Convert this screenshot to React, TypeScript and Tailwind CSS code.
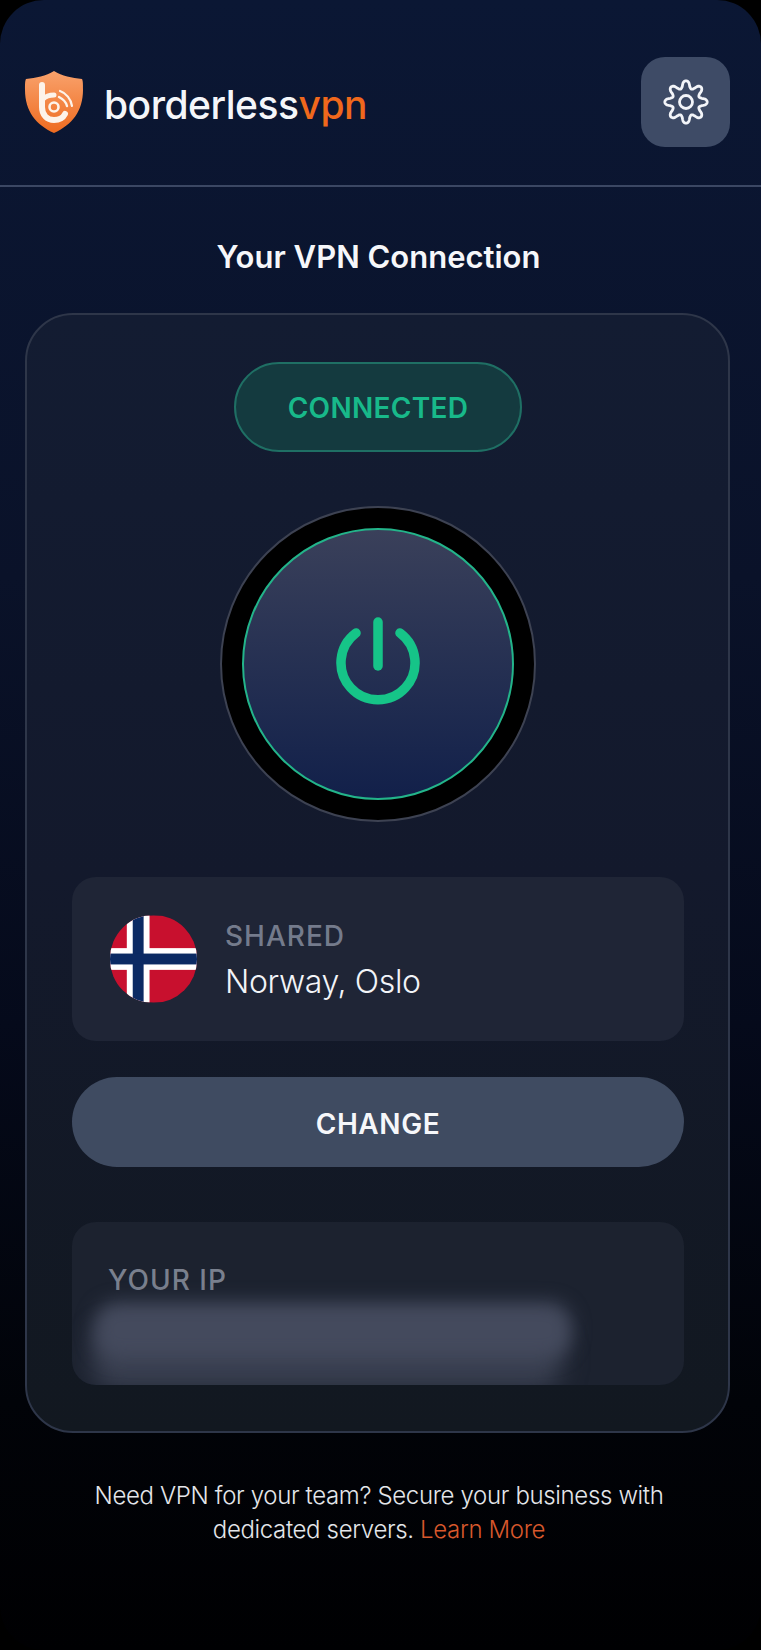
import React from "react";

function Shield() {
  return (
    <svg width="60" height="64" viewBox="0 0 60 64" fill="none">
      <defs>
        <linearGradient id="sh" x1="0" y1="0" x2="0" y2="1">
          <stop offset="0" stopColor="#f9a26c" />
          <stop offset="1" stopColor="#ee6b20" />
        </linearGradient>
      </defs>
      <path d="M30 1C38 6 48 8 58 9C59 11 59 14 59 20C59 41 48 55 30 63C12 55 1 41 1 20C1 14 1 11 2 9C12 8 22 6 30 1Z" fill="url(#sh)" />
      <path d="M18 15V37C18 45 23 50 30 50C35 50 39 48 41 44" stroke="#fdf3ea" strokeWidth="6" strokeLinecap="round" />
      <path d="M19 29C22 26 26 25 30 25" stroke="#fdf3ea" strokeWidth="5" strokeLinecap="round" />
      <circle cx="30" cy="37" r="4.5" stroke="#fdf3ea" strokeWidth="2.6" />
      <path d="M35 27C39 29 42 32 43 36" stroke="#fdf3ea" strokeWidth="2.4" strokeLinecap="round" />
      <path d="M36 21C42 23 47 29 48 36" stroke="#fdf3ea" strokeWidth="2.2" strokeLinecap="round" />
    </svg>
  );
}

function gearPath() {
  const pts: string[] = [];
  const n = 160;
  for (let i = 0; i < n; i++) {
    const t = (i / n) * Math.PI * 2;
    const c = Math.cos(8 * t);
    const r = 17.6 + 3.6 * Math.sign(c) * Math.pow(Math.abs(c), 0.7);
    const x = 24 + r * Math.sin(t);
    const y = 24 - r * Math.cos(t);
    pts.push(`${i === 0 ? "M" : "L"}${x.toFixed(2)} ${y.toFixed(2)}`);
  }
  return pts.join(" ") + " Z";
}

function Gear() {
  return (
    <svg width="48" height="48" viewBox="0 0 48 48" fill="none" stroke="#f3f5f9" strokeWidth="2.8" strokeLinejoin="round">
      <path d={gearPath()} />
      <circle cx="24" cy="24" r="6.5" />
    </svg>
  );
}

function Power() {
  return (
    <svg width="84" height="88" viewBox="0 0 84 88" fill="none" stroke="#16c488" strokeWidth="9.5" strokeLinecap="round" className="mb-[6px]">
      <path d="M42 5V49" />
      <path d="M20 16A37 37 0 1 0 64 16" />
    </svg>
  );
}

function Flag() {
  return (
    <svg width="87" height="88" viewBox="0 0 88 88" className="rounded-full shrink-0">
      <rect width="88" height="88" fill="#c8102e" />
      <rect x="17" width="23" height="88" fill="#ffffff" />
      <rect y="33" width="88" height="22" fill="#ffffff" />
      <rect x="23" width="11" height="88" fill="#0b2a63" />
      <rect y="38.5" width="88" height="11" fill="#0b2a63" />
    </svg>
  );
}

export default function App() {
  return (
    <div className="w-[761px] h-[1650px] bg-black font-['Inter',sans-serif]">
      <div className="h-full rounded-[44px] bg-[linear-gradient(to_bottom,#0b1734_0%,#0a1229_35%,#050a1b_62%,#010308_85%,#000002_100%)] flex flex-col">
        <header className="h-[187px] shrink-0 border-b-2 border-[#3b4763] flex items-center justify-between pl-6 pr-[31px] pt-[18px]">
          <div className="flex items-center gap-[20px]">
            <Shield />
            <div className="text-[39px] font-medium tracking-[-0.5px] leading-none text-[#f4f6fa] pt-[6px]">
              borderless<span className="text-[#f0681c]">vpn</span>
            </div>
          </div>
          <button className="w-[89px] h-[90px] rounded-[24px] bg-[#3e4b66] flex items-center justify-center">
            <Gear />
          </button>
        </header>

        <h1 className="text-center text-[31px] font-semibold leading-none text-[#f6f7fa] mt-[54px] pr-[4px]">
          Your VPN Connection
        </h1>

        <main className="ml-[25px] mr-[31px] mt-[41px] h-[1120px] rounded-[48px] border-2 border-[#2e3649] bg-gradient-to-b from-[#131c32] via-[#13192c] to-[#121820] pl-[45px] pr-[44px] flex flex-col">
          <div className="self-center mt-[47px] w-[288px] h-[90px] rounded-full border-2 border-[#1f6f64] bg-[#143a3f] flex items-center justify-center pt-[2px] text-[28px] font-semibold text-[#18b98a] tracking-[0.3px]">
            CONNECTED
          </div>

          <div className="self-center mt-[54px] w-[316px] h-[316px] rounded-full bg-black border-2 border-[#3d4252] flex items-center justify-center">
            <div className="w-[272px] h-[272px] rounded-full border-2 border-[#23b48a] bg-gradient-to-b from-[#3a405a] to-[#12204a] flex items-center justify-center">
              <Power />
            </div>
          </div>

          <section className="mt-[55px] h-[164px] rounded-[24px] bg-[#1f2536] flex items-center pl-[38px] gap-[28px]">
            <Flag />
            <div className="flex flex-col">
              <span className="text-[28px] font-medium leading-[32px] tracking-[1px] text-[#747b8c]">SHARED</span>
              <span className="text-[32px] font-light leading-[32px] mt-[14px] text-[#f2f4f8] tracking-[-0.35px]">Norway, Oslo</span>
            </div>
          </section>

          <button className="mt-[36px] h-[90px] rounded-full bg-[#3f4b61] pt-[4px] text-[28px] font-semibold text-[#f6f7fa] tracking-[0.6px]">
            CHANGE
          </button>

          <section className="relative mt-[55px] h-[163px] rounded-[24px] bg-[#1c222f] overflow-hidden pl-[36px] pt-[42px]">
            <span className="block text-[28px] font-medium leading-[32px] tracking-[1px] text-[#7a808e]">YOUR IP</span>
            <div className="absolute left-[20px] top-[104px] w-[470px] h-[64px] rounded-[24px] bg-[#393f50] blur-[12px]" />
            <div className="absolute left-[22px] top-[80px] w-[478px] h-[56px] rounded-[24px] bg-[#444a5d] blur-[9px]" />
          </section>
        </main>

        <p className="mt-[46px] pr-[3px] text-center text-[24px] font-light leading-[34px] tracking-[-0.35px] text-[#e4e6ea]">
          Need VPN for your team? Secure your business with
          <br />
          dedicated servers. <span className="text-[#d8582c]">Learn More</span>
        </p>
      </div>
    </div>
  );
}
